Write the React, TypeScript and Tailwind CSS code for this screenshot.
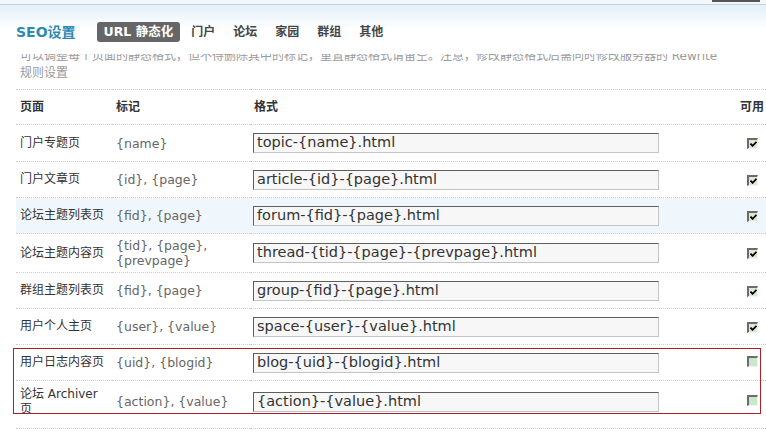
import React from "react";

type Rule = {
  page: string;
  marks: string;
  format: string;
  enabled: boolean;
  height: string;
  highlight?: boolean;
};

const rules: Rule[] = [
  { page: "门户专题页", marks: "{name}", format: "topic-{name}.html", enabled: true, height: "h-[37px]" },
  { page: "门户文章页", marks: "{id}, {page}", format: "article-{id}-{page}.html", enabled: true, height: "h-[36px]" },
  { page: "论坛主题列表页", marks: "{fid}, {page}", format: "forum-{fid}-{page}.html", enabled: true, height: "h-[36px]", highlight: true },
  { page: "论坛主题内容页", marks: "{tid}, {page}, {prevpage}", format: "thread-{tid}-{page}-{prevpage}.html", enabled: true, height: "h-[39px]" },
  { page: "群组主题列表页", marks: "{fid}, {page}", format: "group-{fid}-{page}.html", enabled: true, height: "h-[36px]" },
  { page: "用户个人主页", marks: "{user}, {value}", format: "space-{user}-{value}.html", enabled: true, height: "h-[36px]" },
  { page: "用户日志内容页", marks: "{uid}, {blogid}", format: "blog-{uid}-{blogid}.html", enabled: false, height: "h-[36px]" },
  { page: "论坛 Archiver 页", marks: "{action}, {value}", format: "{action}-{value}.html", enabled: false, height: "h-[48px] [&>td]:pb-[6px]" },
];

const tabs = ["门户", "论坛", "家园", "群组", "其他"];

function Checkbox({ checked }: { checked: boolean }) {
  return (
    <span
      className={`inline-flex h-[11px] w-[11px] items-center justify-center border-t-2 border-l-2 border-t-[#6b6b6b] border-l-[#6b6b6b] border-b border-r border-b-[#f4f4f4] border-r-[#f4f4f4] ${
        checked ? "bg-[#dde8d5]" : "bg-[#c9e8cb]"
      }`}
    >
      {checked && (
        <svg width="7" height="6" viewBox="0 0 7 6">
          <path d="M0.5 2.6 L2.6 4.8 L6.5 0.8" fill="none" stroke="#000" strokeWidth="1.8" />
        </svg>
      )}
    </span>
  );
}

export default function App() {
  return (
    <div
      className="relative h-[434px] w-[766px] overflow-hidden bg-white text-[12px] text-[#333]"
      style={{ fontFamily: '"DejaVu Sans", "Noto Sans CJK SC", sans-serif' }}
    >
      <div className="flex h-[4px] justify-end bg-[#f4f7f9] pr-[6px]">
        <div className="h-[2px] w-[48px] bg-[#555]" />
      </div>
      <div className="h-px bg-[#c3d5de]" />

      <div className="relative z-10 flex h-[49px] items-start bg-gradient-to-b from-[#e2f0f8] via-white to-white pl-[16px] pt-[17px]">
        <h2 className="mr-[21px] text-[14px] leading-[20px] font-bold text-[#2d8ab3]">SEO设置</h2>
        <span className="flex h-[20px] items-center rounded-[3px] bg-[#666] px-[7px] text-[12.5px] font-bold text-white">
          URL 静态化
        </span>
        {tabs.map((tab, i) => (
          <span
            key={tab}
            className={`${i === 0 ? "ml-[11px]" : "ml-[18px]"} flex h-[20px] items-center text-[12px] font-bold text-[#454545]`}
          >
            {tab}
          </span>
        ))}
      </div>

      <p className="-mt-[6px] px-[20px] text-[12px] leading-[17px] text-[#9a9a9a]">
        可以调整每个页面的静态格式，但不得删除其中的标记，重置静态格式请留空。注意，修改静态格式后需同时修改服务器的 Rewrite
        <br />
        规则设置
      </p>

      <table className="ml-[16px] mt-[7px] w-[800px] table-fixed border-collapse">
        <colgroup>
          <col className="w-[96px]" />
          <col className="w-[138px]" />
          <col className="w-[486px]" />
          <col className="w-[80px]" />
        </colgroup>
        <thead>
          <tr className="h-[35px] border-t border-b border-dotted border-[#cfcfcf] text-left">
            <th className="px-[4px] font-bold">页面</th>
            <th className="px-[4px] font-bold">标记</th>
            <th className="px-[4px] font-bold">格式</th>
            <th className="px-[4px] font-bold">可用</th>
          </tr>
        </thead>
        <tbody>
          {rules.map((rule) => (
            <tr
              key={rule.page}
              className={`${rule.height} border-b border-dotted border-[#cfcfcf] ${rule.highlight ? "bg-[#f0f7fc]" : ""}`}
            >
              <td className="px-[4px] align-middle leading-[15px] text-[#333]">{rule.page}</td>
              <td className="px-[4px] align-middle text-[12.5px] leading-[15px] text-[#666]">{rule.marks}</td>
              <td className="pl-[3px] align-middle">
                <div className="flex h-[20px] w-[406px] items-center border-t border-l border-t-[#5e5e5e] border-l-[#5e5e5e] border-b border-r border-b-[#c4c4c4] border-r-[#c4c4c4] bg-[#f7f7f7] pl-[3px] text-[14.5px] text-[#333]">
                  {rule.format}
                </div>
              </td>
              <td className="pl-[11px] align-middle">
                <Checkbox checked={rule.enabled} />
              </td>
            </tr>
          ))}
        </tbody>
      </table>

      <div className="pointer-events-none absolute left-[13px] top-[348px] h-[66px] w-[748px] border border-[#a8202a]" />
    </div>
  );
}
